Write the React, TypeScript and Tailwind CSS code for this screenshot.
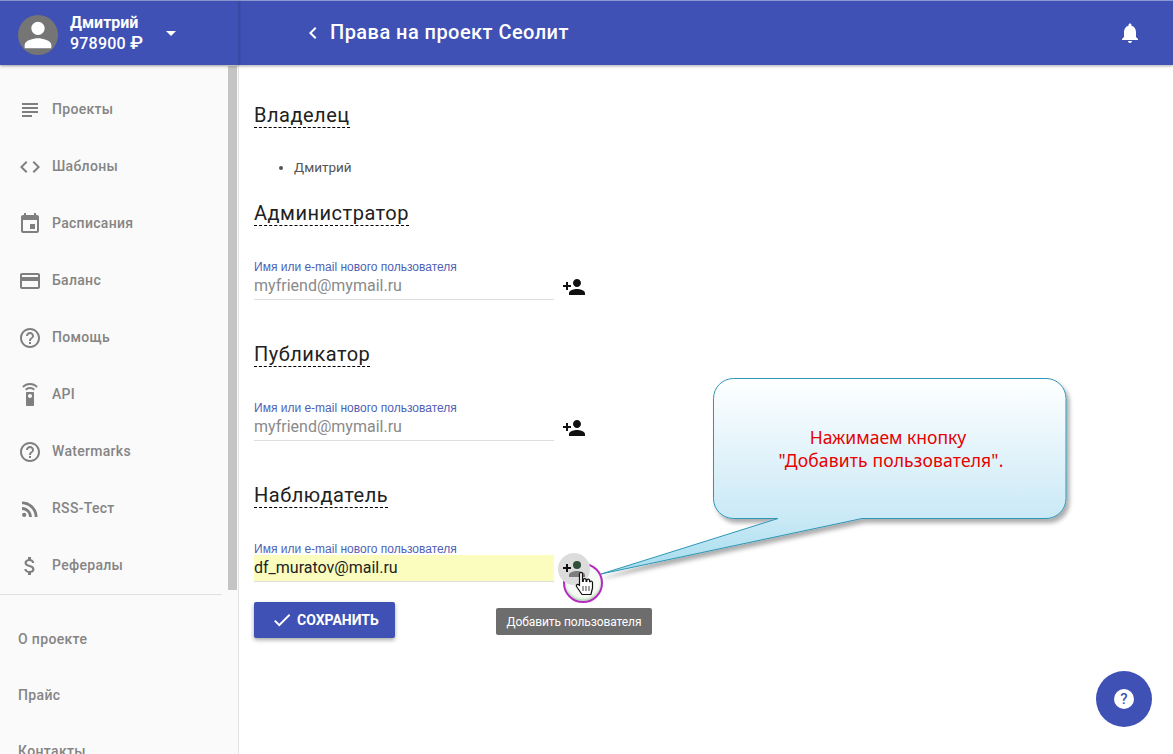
import React from 'react';

const ICONS: Record<string, string> = {
  subject: 'M14 17H4v2h10v-2zm6-8H4v2h16V9zM4 15h16v-2H4v2zM4 5v2h16V5H4z',
  code: 'M9.4 16.6L4.8 12l4.6-4.6L8 6l-6 6 6 6 1.4-1.4zm5.2 0l4.6-4.6-4.6-4.6L16 6l6 6-6 6-1.4-1.4z',
  event: 'M17 12h-5v5h5v-5zM16 1v2H8V1H6v2H5c-1.11 0-1.99.9-1.99 2L3 19c0 1.1.89 2 2 2h14c1.1 0 2-.9 2-2V5c0-1.1-.9-2-2-2h-1V1h-2zm3 18H5V8h14v11z',
  card: 'M20 4H4c-1.11 0-1.99.89-1.99 2L2 18c0 1.11.89 2 2 2h16c1.11 0 2-.89 2-2V6c0-1.11-.89-2-2-2zm0 14H4v-6h16v6zm0-10H4V6h16v2z',
  help: 'M11 18h2v-2h-2v2zm1-16C6.48 2 2 6.48 2 12s4.48 10 10 10 10-4.48 10-10S17.52 2 12 2zm0 18c-4.41 0-8-3.59-8-8s3.59-8 8-8 8 3.59 8 8-3.59 8-8 8zm0-14c-2.21 0-4 1.79-4 4h2c0-1.1.9-2 2-2s2 .9 2 2c0 2-3 1.75-3 5h2c0-2.25 3-2.5 3-5 0-2.21-1.79-4-4-4z',
  remote: 'M15 9H9c-.55 0-1 .45-1 1v12c0 .55.45 1 1 1h6c.55 0 1-.45 1-1V10c0-.55-.45-1-1-1zm-3 6c-1.1 0-2-.9-2-2s.9-2 2-2 2 .9 2 2-.9 2-2 2zM7.05 6.05l1.41 1.41C9.37 6.56 10.62 6 12 6s2.63.56 3.54 1.46l1.41-1.41C15.68 4.78 13.93 4 12 4s-3.68.78-4.95 2.05zM12 0C8.96 0 6.21 1.23 4.22 3.22l1.41 1.41C7.26 3.01 9.51 2 12 2s4.74 1.01 6.36 2.64l1.41-1.41C17.79 1.23 15.04 0 12 0z',
  rss: 'M8.36 17.82a2.18 2.18 0 1 1-4.36 0 2.18 2.18 0 0 1 4.36 0zM4 4.44v2.83c7.03 0 12.73 5.7 12.73 12.73h2.83c0-8.59-6.97-15.56-15.56-15.56zm0 5.66v2.83c3.9 0 7.07 3.17 7.07 7.07h2.83c0-5.47-4.43-9.9-9.9-9.9z',
  money: 'M11.8 10.9c-2.27-.59-3-1.2-3-2.15 0-1.09 1.01-1.85 2.7-1.85 1.78 0 2.44.85 2.5 2.1h2.21c-.07-1.72-1.12-3.3-3.21-3.81V3h-3v2.16c-1.94.42-3.5 1.68-3.5 3.61 0 2.31 1.91 3.46 4.7 4.13 2.5.6 3 1.48 3 2.41 0 .69-.49 1.79-2.7 1.79-2.06 0-2.87-.92-2.98-2.1h-2.2c.12 2.19 1.76 3.42 3.68 3.83V21h3v-2.15c1.95-.37 3.5-1.5 3.5-3.55 0-2.84-2.43-3.81-4.7-4.4z',
  personAdd: 'M15 12c2.21 0 4-1.79 4-4s-1.79-4-4-4-4 1.79-4 4 1.79 4 4 4zm-9-2V7H4v3H1v2h3v3h2v-3h3v-2H6zm9 4c-2.67 0-8 1.34-8 4v2h16v-2c0-2.66-5.33-4-8-4z',
  person: 'M12 12c2.21 0 4-1.79 4-4s-1.79-4-4-4-4 1.79-4 4 1.79 4 4 4zm0 2c-2.67 0-8 1.34-8 4v2h16v-2c0-2.66-5.33-4-8-4z',
  bell: 'M12 22c1.1 0 2-.9 2-2h-4c0 1.1.89 2 2 2zm6-6v-5c0-3.07-1.64-5.64-4.5-6.32V4c0-.83-.67-1.5-1.5-1.5s-1.5.67-1.5 1.5v.68C7.63 5.36 6 7.92 6 11v5l-2 2v1h16v-1l-2-2z',
  check: 'M9 16.17L4.83 12l-1.42 1.41L9 19 21 7l-1.41-1.41z',
  chevron: 'M15.41 7.41L14 6l-6 6 6 6 1.41-1.41L10.83 12z',
};

const Icon: React.FC<{ name: string; className?: string }> = ({ name, className }) => (
  <svg viewBox="0 0 24 24" fill="currentColor" className={className}>
    <path d={ICONS[name]} />
  </svg>
);

const menu = [
  { icon: 'subject', label: 'Проекты' },
  { icon: 'code', label: 'Шаблоны' },
  { icon: 'event', label: 'Расписания' },
  { icon: 'card', label: 'Баланс' },
  { icon: 'help', label: 'Помощь' },
  { icon: 'remote', label: 'API' },
  { icon: 'help', label: 'Watermarks' },
  { icon: 'rss', label: 'RSS-Тест' },
  { icon: 'money', label: 'Рефералы' },
];

const links = ['О проекте', 'Прайс', 'Контакты'];

const Heading: React.FC<{ children: React.ReactNode }> = ({ children }) => (
  <h2 className="w-fit border-b border-dashed border-black text-[20px] leading-[24px] h-[25px] tracking-[0.5px] text-[#212121]">
    {children}
  </h2>
);

const FieldLabel: React.FC = () => (
  <div className="text-[12px] leading-[12px] text-[#4f5fb5] font-['Liberation_Sans',sans-serif]">
    Имя или e-mail нового пользователя
  </div>
);

const UserField: React.FC = () => (
  <div className="mt-[35px] flex items-start">
    <div className="w-[300px] h-[39px] border-b border-[#dedede]">
      <FieldLabel />
      <div className="text-[16px] leading-[26px] text-[#8a8a8a]">myfriend@mymail.ru</div>
    </div>
    <Icon name="personAdd" className="w-6 h-6 ml-2 mt-[14px] text-[#111]" />
  </div>
);

export default function App() {
  return (
    <div className="relative h-screen w-full overflow-hidden bg-white font-['Roboto',sans-serif]">
      {/* Header */}
      <header className="relative z-10 flex h-[65px] bg-[#3f51b5] border-t border-[#8d97d3] shadow-[0_1px_3px_rgba(0,0,0,0.35)] text-white">
        <div className="flex w-[239px] shrink-0 items-center border-r border-[#3949a3] pl-[18px] pt-[4px] shadow-[1px_0_2px_rgba(0,0,0,0.12)]">
          <div className="flex h-10 w-10 items-center justify-center rounded-full bg-[#757575]">
            <Icon name="person" className="h-10 w-10 text-white" />
          </div>
          <div className="ml-3 w-[96px] -mt-[4px]">
            <div className="text-[16px] leading-[21px] font-bold">Дмитрий</div>
            <div className="h-[21px] text-[16px] leading-[21px] font-medium tracking-[0.2px]">
              978900 <span className="text-[19px] leading-none">₽</span>
            </div>
          </div>
          <div className="-mt-[4px] h-0 w-0 border-x-[5px] border-t-[5px] border-x-transparent border-t-white" />
        </div>
        <div className="flex flex-1 items-center">
          <Icon name="chevron" className="ml-[62px] -mt-[1px] h-6 w-6" />
          <h1 className="ml-[5px] -mt-[3px] text-[20px] font-medium tracking-[0.45px]">Права на проект Сеолит</h1>
          <Icon name="bell" className="ml-auto mr-[31px] h-6 w-6" />
        </div>
      </header>

      <div className="flex h-[689px]">
        {/* Sidebar */}
        <aside className="relative w-[239px] shrink-0 overflow-hidden border-r border-[#e4e4e4] bg-[#fafafa]">
          <div className="absolute right-[1px] top-[1px] h-[524px] w-[9px] bg-[#c4c4c4]" />
          <nav className="pt-[16px]">
            {menu.map((item) => (
              <div key={item.label + item.icon} className="flex h-[57px] items-center pl-[18px]">
                <Icon name={item.icon} className="h-6 w-6 text-[#7f7f7f]" />
                <span className="ml-[10px] text-[14px] font-medium tracking-[0.3px] text-[#858585]">{item.label}</span>
              </div>
            ))}
          </nav>
          <div className="w-[222px] border-t border-[#e0e0e0]" />
          <div className="pt-[16px]">
            {links.map((link) => (
              <div key={link} className="flex h-[56px] items-center pl-[18px] text-[14px] font-medium tracking-[0.35px] text-[#858585]">
                {link}
              </div>
            ))}
          </div>
        </aside>

        {/* Content */}
        <main className="flex-1 pl-[15px] pt-[38px]">
          <Heading>Владелец</Heading>
          <ul className="mt-[29px] ml-[40px] list-disc text-[13.5px] leading-[20px] text-[#555]">
            <li>Дмитрий</li>
          </ul>
          <div className="mt-[24px]">
            <Heading>Администратор</Heading>
          </div>
          <UserField />
          <div className="mt-[42px]">
            <Heading>Публикатор</Heading>
          </div>
          <UserField />
          <div className="mt-[42px]">
            <Heading>Наблюдатель</Heading>
          </div>
          <div className="mt-[35px] flex items-start">
            <div className="w-[300px] h-[39px] border-b border-[#dedede]">
              <FieldLabel />
              <div className="h-[26px] bg-[#fbfdbf] text-[16px] leading-[26px] text-[#222]">df_muratov@mail.ru</div>
            </div>
          </div>
          <button className="mt-[20px] flex h-[36px] w-[141px] items-center rounded-[2px] bg-[#3f51b5] pl-[17px] text-[14px] font-bold text-white shadow-[0_2px_4px_rgba(0,0,0,0.35)]">
            <Icon name="check" className="h-[22px] w-[22px]" />
            <span className="ml-[4px]">СОХРАНИТЬ</span>
          </button>
        </main>
      </div>

      {/* Highlight ring under the hovered add-user button */}
      <div className="absolute left-[563px] top-[563px] h-[40px] w-[40px] rounded-full border-2 border-[#b52bbf] bg-[#f6faf4] shadow-[inset_0_-2px_2px_rgba(120,190,120,0.5)]" />
      <div className="absolute left-[558px] top-[553px] flex h-8 w-8 items-center justify-center overflow-hidden rounded-full bg-[#dcdcdc]">
        <svg viewBox="0 0 24 24" className="h-6 w-6">
          <path d="M6 10V7H4v3H1v2h3v3h2v-3h3v-2H6z" fill="#111" />
          <circle cx="15" cy="8" r="4" fill="#2f4f3a" />
          <path d="M15 14c-2.67 0-8 1.34-8 4v2h16v-2c0-2.66-5.33-4-8-4z" fill="#7d7d7d" />
        </svg>
      </div>

      {/* Tooltip */}
      <div className="absolute left-[496px] top-[608px] flex h-[27px] w-[156px] items-center justify-center rounded-[2px] bg-[#6d6d6d] text-[12px] tracking-[-0.08px] text-white">
        Добавить пользователя
      </div>

      {/* Callout */}
      <svg className="absolute left-[590px] top-[370px] h-[220px] w-[500px] overflow-visible" viewBox="0 0 500 220">
        <defs>
          <linearGradient id="calloutFill" x1="0" y1="8" x2="0" y2="205" gradientUnits="userSpaceOnUse">
            <stop offset="0" stopColor="#ffffff" />
            <stop offset="0.72" stopColor="#c9e9f6" />
            <stop offset="1" stopColor="#a3dbec" />
          </linearGradient>
          <filter id="calloutShadow" x="-10%" y="-10%" width="120%" height="125%">
            <feDropShadow dx="3" dy="4" stdDeviation="2.2" floodColor="#000" floodOpacity="0.32" />
          </filter>
        </defs>
        <path
          d="M143.5 8.5H456a20 20 0 0 1 20 20V128.5a20 20 0 0 1-20 20H272L11 204 188 148.5H143.5a20 20 0 0 1-20-20V28.5a20 20 0 0 1 20-20z"
          fill="url(#calloutFill)"
          stroke="#2f97b5"
          strokeWidth="1"
          filter="url(#calloutShadow)"
        />
      </svg>
      <div className="absolute left-[714px] top-[426px] w-[352px] text-center font-['Noto_Sans',sans-serif] text-[17.5px] leading-[23px] text-[#e60000]">
        <div className="pr-[4px]">Нажимаем кнопку</div>
        <div className="pl-[2px] tracking-[0.15px]">"Добавить пользователя".</div>
      </div>

      {/* Pointer cursor */}
      <svg className="absolute left-[575px] top-[572px] h-[24px] w-[19px]" viewBox="0 0 19 24">
        <path
          d="M4.5 2a1.5 1.5 0 0 1 3 0v7.5h.8V8a1.4 1.4 0 0 1 2.8 0v1.5h.7v-1a1.4 1.4 0 0 1 2.8 0v1.2h.6a1.3 1.3 0 0 1 2.3.8V16l-1.6 6.5H7L1.5 14.5a1.5 1.5 0 0 1 2.5-1.6l.5.6z"
          fill="#fff"
          stroke="#111"
          strokeWidth="1.2"
          strokeLinejoin="round"
        />
        <path d="M8 14v5M11 14v5M14 14v5" stroke="#111" strokeWidth="0.8" />
      </svg>

      {/* Help button */}
      <div className="absolute left-[1096px] top-[671px] flex h-[56px] w-[56px] items-center justify-center rounded-full bg-[#3f51b5]">
        <div className="flex h-[20px] w-[20px] items-center justify-center rounded-full bg-white font-medium text-[15px] leading-none text-[#3f51b5]">
          ?
        </div>
      </div>
    </div>
  );
}
